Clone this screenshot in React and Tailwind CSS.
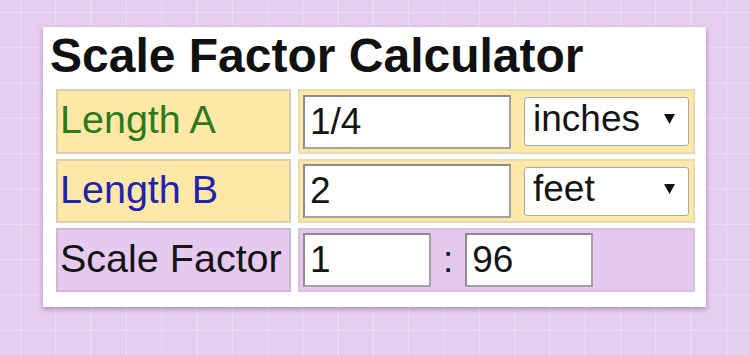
import React from 'react';

const font = { fontFamily: '"Liberation Sans", Arial, sans-serif' };

function Field({ value, width }) {
  return (
    <input
      type="text"
      defaultValue={value}
      className={`${width} h-[54px] bg-white border-2 border-[#a3a3a3] border-t-[#8c8c8c] border-l-[#8c8c8c] pl-[5px] text-[37px] text-[#151515] outline-none`}
    />
  );
}

function Unit({ value, options }) {
  return (
    <div className="relative">
      <select
        defaultValue={value}
        className="appearance-none w-[165px] h-[49px] bg-white border border-[#a9a9a9] rounded-[3px] pl-[8px] pb-[5px] text-[37px] leading-[40px] text-[#151515] outline-none"
      >
        {options.map((o) => (
          <option key={o}>{o}</option>
        ))}
      </select>
      <svg
        className="pointer-events-none absolute right-[14px] top-[17px]"
        width="11"
        height="10"
        viewBox="0 0 11 10"
      >
        <path d="M0 0 H11 L5.5 10 Z" fill="#111" />
      </svg>
    </div>
  );
}

export default function App() {
  const units = ['inches', 'feet', 'yards', 'centimeters', 'meters'];

  return (
    <div
      style={font}
      className="w-[750px] h-[355px] overflow-hidden bg-[#e6cef0] [background-image:linear-gradient(to_right,rgba(255,255,255,0.35)_1px,transparent_1px),linear-gradient(to_bottom,rgba(255,255,255,0.3)_1px,transparent_1px)] [background-size:35.3px_35.3px] [background-position:20px_12px] pt-[27px] pl-[43px]"
    >
      <div className="w-[663px] h-[280px] bg-white pt-[2px] pl-[13px] shadow-[0_2px_5px_rgba(90,50,110,0.45)]">
        <h1 className="-ml-[6px] text-[48px] leading-[54px] font-bold text-[#111]">
          Scale Factor Calculator
        </h1>

        <div className="mt-[6px] grid grid-cols-[235px_397px] grid-rows-[65px_64px_64px] gap-x-[7px] gap-y-[5px]">
          {/* Length A */}
          <div className="flex items-center pl-[2px] pb-[3px] bg-[#fde8a8] border-2 border-[#d8cfae]">
            <span className="text-[39.5px] text-[#2d7a1c]">Length A</span>
          </div>
          <div className="flex items-center gap-[13px] pl-[3px] bg-[#fde8a8] border-2 border-[#e6dcb4]">
            <Field value="1/4" width="w-[208px]" />
            <Unit value="inches" options={units} />
          </div>

          {/* Length B */}
          <div className="flex items-center pl-[2px] pb-[3px] bg-[#fde8a8] border-2 border-[#d8cfae]">
            <span className="text-[39.5px] text-[#2222b0]">Length B</span>
          </div>
          <div className="flex items-center gap-[13px] pl-[3px] bg-[#fde8a8] border-2 border-[#e6dcb4]">
            <Field value="2" width="w-[208px]" />
            <Unit value="feet" options={units} />
          </div>

          {/* Scale factor */}
          <div className="flex items-center pl-[2px] pb-[3px] bg-[#e6c9ef] border-2 border-[#cdb9d3]">
            <span className="text-[39.5px] text-[#151515]">Scale Factor</span>
          </div>
          <div className="flex items-center pl-[3px] bg-[#e6c9ef] border-2 border-[#d6c0dc]">
            <Field value="1" width="w-[128px]" />
            <span className="mx-[12px] text-[37px] text-[#151515]">:</span>
            <Field value="96" width="w-[128px]" />
          </div>
        </div>
      </div>
    </div>
  );
}
